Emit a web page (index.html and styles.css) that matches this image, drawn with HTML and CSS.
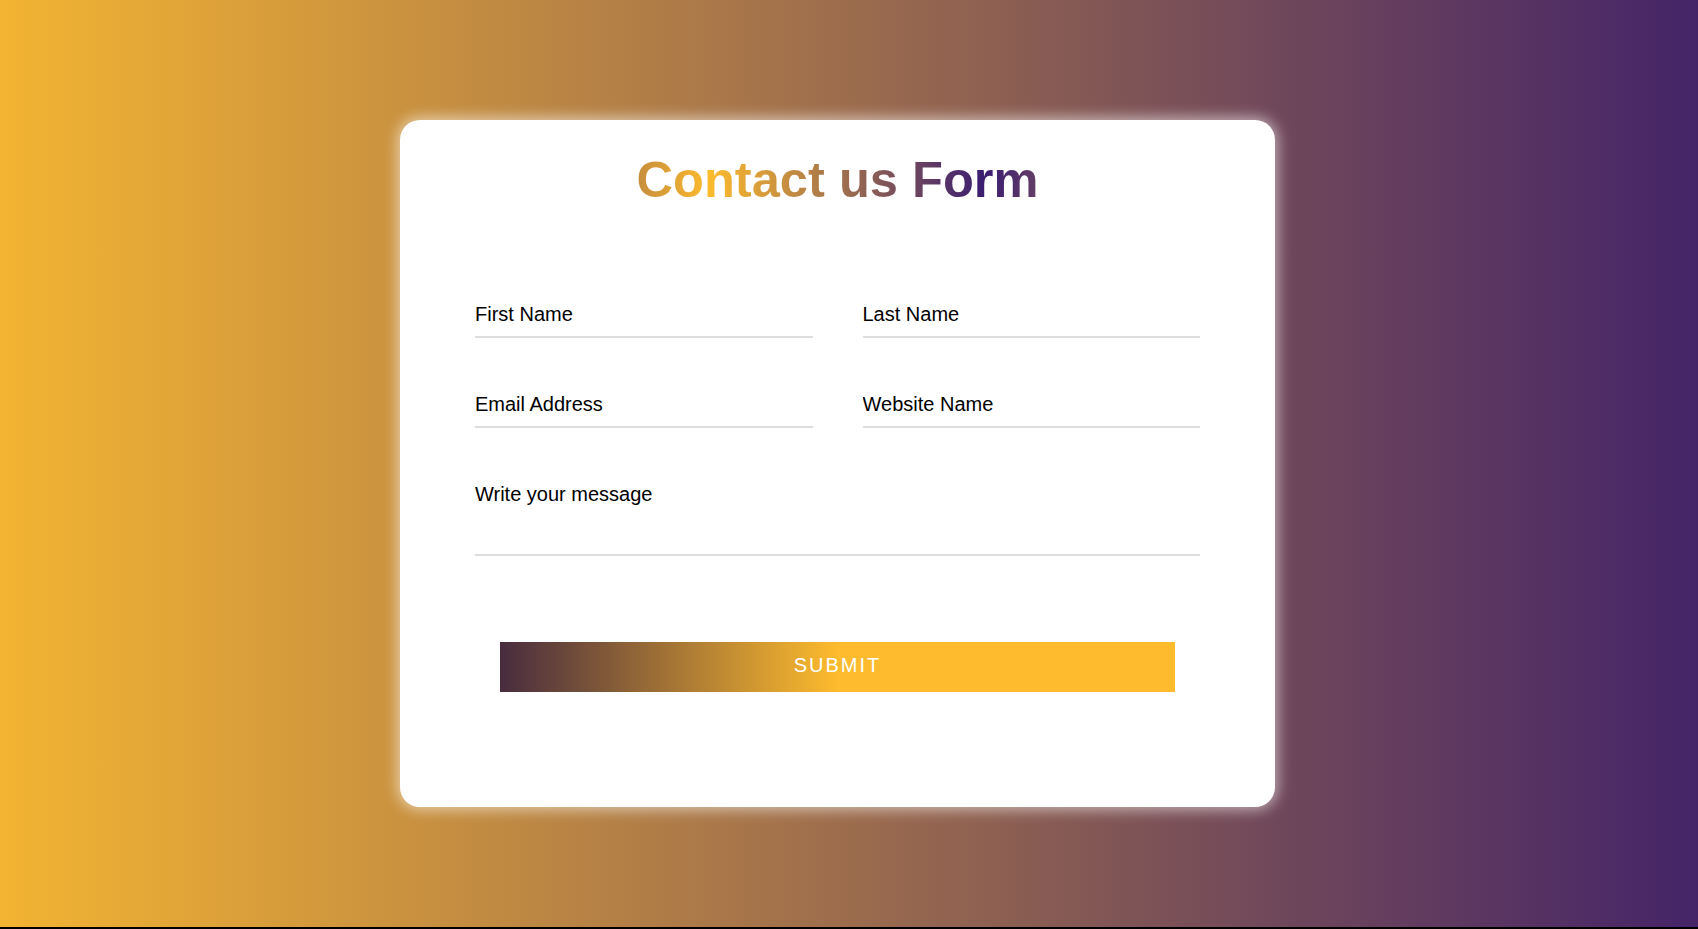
FILE: index.html
```html
<!DOCTYPE html>
<html lang="en">
<head>
<meta charset="utf-8">
<title>Contact us Form</title>
<link rel="stylesheet" href="styles.css">
</head>
<body>
  <main class="card">
    <h1 class="title"><span class="title-text">Contact us Form</span></h1>
    <form class="form">
      <div class="row">
        <input class="field" type="text" placeholder="First Name">
        <input class="field" type="text" placeholder="Last Name">
      </div>
      <div class="row">
        <input class="field" type="email" placeholder="Email Address">
        <input class="field" type="text" placeholder="Website Name">
      </div>
      <textarea class="field message" placeholder="Write your message"></textarea>
      <button class="submit" type="button">SUBMIT</button>
    </form>
  </main>
</body>
</html>
```
FILE: styles.css
```css
* {
  box-sizing: border-box;
}

html {
  background: #000;
}

body {
  margin: 0;
  height: calc(100vh - 2px);
  padding-right: 23px;
  display: flex;
  align-items: center;
  justify-content: center;
  background: linear-gradient(to right, #f3b432, #452468);
  font-family: "Liberation Sans", Arial, sans-serif;
}

.card {
  width: 875px;
  background: #fff;
  border-radius: 20px;
  padding: 30px 75px 115px;
  box-shadow: 0 0 14px 3px rgba(255, 255, 255, 0.55);
}

.title {
  margin: 0;
  text-align: center;
  font-size: 50.6px;
  line-height: 60px;
  font-weight: 700;
}

.title-text {
  display: inline-block;
  background: linear-gradient(to right, #c68d3d 0%, #fdbb2d 18%, #3a1c71 87%, #643e66 100%);
  -webkit-background-clip: text;
  background-clip: text;
  color: transparent;
}

.form {
  margin-top: 83px;
  display: flex;
  flex-direction: column;
  gap: 45px;
}

.row {
  display: grid;
  grid-template-columns: 1fr 1fr;
  gap: 50px;
}

.field {
  display: block;
  width: 100%;
  border: none;
  border-bottom: 2px solid #dddddd;
  outline: none;
  padding: 10px 0;
  font-family: "Liberation Sans", Arial, sans-serif;
  font-size: 20px;
  line-height: 23px;
  color: #000;
  background: transparent;
}

.field::placeholder {
  color: #000;
  opacity: 1;
}

.message {
  height: 83px;
  resize: none;
}

.submit {
  margin: 41px 25px 0;
  height: 50px;
  padding: 0 0 3px;
  border: none;
  background: linear-gradient(to right, #482c3e 0%, #fdbb2d 50%, #fdbb2d 100%);
  color: #fff;
  font-family: "Liberation Sans", Arial, sans-serif;
  font-size: 20px;
  letter-spacing: 2px;
  cursor: pointer;
}
```
